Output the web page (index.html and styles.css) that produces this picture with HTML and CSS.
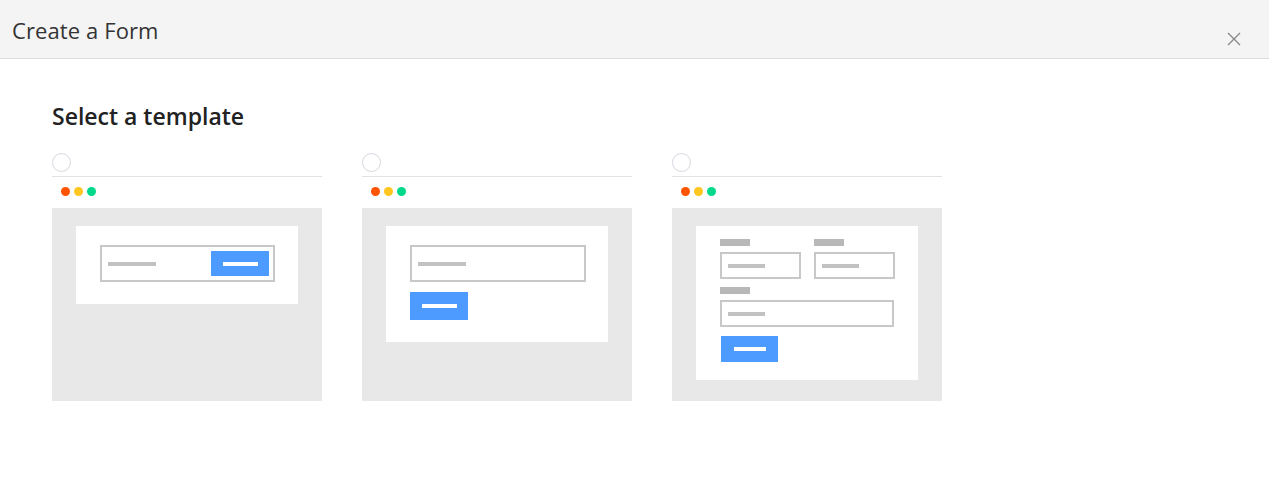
FILE: index.html
```html
<!DOCTYPE html>
<html lang="en">
<head>
<meta charset="utf-8">
<title>Create a Form</title>
<link rel="stylesheet" href="styles.css">
</head>
<body>
<div class="dialog">
  <header class="dialog-header">
    <h1 class="dialog-title">Create a Form</h1>
    <button class="close-btn" aria-label="Close">
      <svg viewBox="0 0 14 14" width="14" height="14"><path d="M1 1 L13 13 M13 1 L1 13" stroke="#8a8a8a" stroke-width="1.4" fill="none"/></svg>
    </button>
  </header>
  <main class="dialog-body">
    <h2 class="section-title">Select a template</h2>
    <div class="templates">
      <!-- Template 1: inline -->
      <div class="template">
        <span class="radio"></span>
        <div class="divider"></div>
        <div class="dots"><span class="dot red"></span><span class="dot yellow"></span><span class="dot green"></span></div>
        <div class="preview">
          <div class="sheet sheet-inline">
            <div class="field field-inline">
              <span class="bar"></span>
              <span class="btn btn-inline"><span class="btn-bar"></span></span>
            </div>
          </div>
        </div>
      </div>
      <!-- Template 2: stacked -->
      <div class="template">
        <span class="radio"></span>
        <div class="divider"></div>
        <div class="dots"><span class="dot red"></span><span class="dot yellow"></span><span class="dot green"></span></div>
        <div class="preview">
          <div class="sheet sheet-stacked">
            <div class="field field-wide"><span class="bar"></span></div>
            <span class="btn btn-stacked"><span class="btn-bar"></span></span>
          </div>
        </div>
      </div>
      <!-- Template 3: full form -->
      <div class="template">
        <span class="radio"></span>
        <div class="divider"></div>
        <div class="dots"><span class="dot red"></span><span class="dot yellow"></span><span class="dot green"></span></div>
        <div class="preview">
          <div class="sheet sheet-form">
            <div class="form-row">
              <div class="form-group">
                <span class="label"></span>
                <div class="field field-small"><span class="bar bar-short"></span></div>
              </div>
              <div class="form-group">
                <span class="label"></span>
                <div class="field field-small"><span class="bar bar-short"></span></div>
              </div>
            </div>
            <div class="form-group">
              <span class="label"></span>
              <div class="field field-full"><span class="bar bar-short"></span></div>
            </div>
            <span class="btn btn-form"><span class="btn-bar btn-bar-short"></span></span>
          </div>
        </div>
      </div>
    </div>
  </main>
</div>
</body>
</html>
```

FILE: styles.css
```css
* { box-sizing: border-box; }

html, body {
  margin: 0;
  padding: 0;
  background: #ffffff;
}

body {
  font-family: "Open Sans", "Noto Sans", "Liberation Sans", sans-serif;
  color: #222;
  width: 1269px;
  height: 478px;
  overflow: hidden;
}

.dialog {
  height: 478px;
  background: #fff;
}

.dialog-header {
  display: flex;
  justify-content: space-between;
  align-items: flex-start;
  height: 59px;
  background: #f4f4f4;
  border-bottom: 1px solid #dcdcdc;
  padding-left: 12px;
}

.dialog-title {
  margin: 0;
  font-size: 22px;
  font-weight: 400;
  line-height: 60px;
  color: #333;
  letter-spacing: 0.1px;
}

.close-btn {
  margin: 32px 28px 0 0;
  padding: 0;
  width: 14px;
  height: 14px;
  border: 0;
  background: transparent;
  display: block;
}
.close-btn svg { display: block; }

.dialog-body {
  padding: 0 52px;
}

.section-title {
  margin: 41px 0 0;
  font-size: 23px;
  font-weight: 600;
  line-height: 32px;
  color: #222;
}

.templates {
  display: flex;
  gap: 40px;
  margin-top: 21px;
}

.template {
  width: 270px;
  display: flex;
  flex-direction: column;
}

.radio {
  width: 19px;
  height: 19px;
  border: 1px solid #d6d8df;
  border-radius: 50%;
  background: #fff;
}

.divider {
  margin-top: 4px;
  height: 1px;
  background: #e3e3e3;
}

.dots {
  display: flex;
  gap: 4px;
  margin-top: 10px;
  padding-left: 9px;
  height: 9px;
}

.dot {
  width: 9px;
  height: 9px;
  border-radius: 50%;
}
.dot.red { background: #ff5500; }
.dot.yellow { background: #ffc61f; }
.dot.green { background: #00d98b; }

.preview {
  margin-top: 12px;
  height: 193px;
  background: #e8e8e8;
  padding: 18px 24px 0;
}

.sheet {
  background: #fff;
  width: 222px;
  padding-left: 24px;
}

.sheet-inline {
  height: 78px;
  padding-top: 19px;
}

.sheet-stacked {
  height: 116px;
  padding-top: 19px;
  display: flex;
  flex-direction: column;
  align-items: flex-start;
}

.sheet-form {
  height: 154px;
  padding-top: 13px;
  display: flex;
  flex-direction: column;
  align-items: flex-start;
}

.field {
  border: 2px solid #c8c8c8;
  display: flex;
  align-items: center;
  padding-left: 6px;
  background: #fff;
}

.field-inline {
  width: 175px;
  height: 37px;
  justify-content: space-between;
  padding-right: 4px;
}

.field-wide {
  width: 176px;
  height: 37px;
}

.bar {
  width: 48px;
  height: 4px;
  background: #c2c2c2;
}

.bar-short {
  width: 37px;
}

.btn {
  background: #4d9bff;
  display: flex;
  align-items: center;
  justify-content: center;
}

.btn-bar {
  width: 35px;
  height: 4px;
  background: #fff;
}

.btn-bar-short {
  width: 32px;
}

.btn-inline {
  width: 58px;
  height: 25px;
}

.btn-stacked {
  width: 58px;
  height: 28px;
  margin-top: 10px;
}

.form-row {
  display: flex;
  gap: 13px;
}

.form-group {
  display: flex;
  flex-direction: column;
  align-items: flex-start;
}

.form-row + .form-group {
  margin-top: 8px;
}

.label {
  width: 30px;
  height: 7px;
  background: #b8b8b8;
  margin-bottom: 6px;
}

.field-small {
  width: 81px;
  height: 27px;
}

.field-full {
  width: 174px;
  height: 27px;
}

.btn-form {
  width: 57px;
  height: 26px;
  margin-top: 9px;
  margin-left: 1px;
}
```
